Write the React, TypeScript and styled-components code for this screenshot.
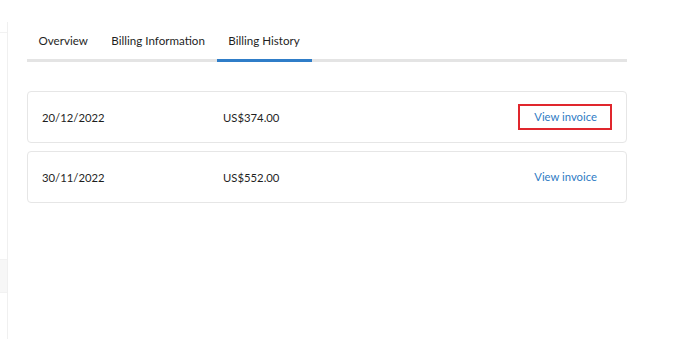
import styled, { createGlobalStyle } from "styled-components";

const GlobalStyle = createGlobalStyle`
  html, body {
    margin: 0;
    padding: 0;
    background: #ffffff;
  }
  body {
    font-family: Lato, "Open Sans", "Liberation Sans", sans-serif;
    color: #222;
  }
`;

const Page = styled.div`
  display: flex;
  min-height: 339px;
`;
const Sidebar = styled.div`
  width: 7px;
  margin-top: 22px;
  border-right: 1px solid #f0f0f0;
  display: flex;
  flex-direction: column;
`;
const SideItem = styled.div<{ $h: number; $shade?: boolean }>`
  height: ${(p) => p.$h}px;
  border-bottom: 1px solid #f2f2f2;
  background: ${(p) => (p.$shade ? "#f7f7f7" : "transparent")};
`;
const Main = styled.div`
  width: 600px;
  margin-left: 19px;
  padding-top: 25px;
`;
const TabList = styled.div`
  display: flex;
  border-bottom: 3px solid #e4e4e4;
`;
const Tab = styled.div<{ $active?: boolean }>`
  padding: 8px 12px 10px 11.5px;
  font-size: 11.6px;
  line-height: 16px;
  color: #1f1f1f;
  margin-bottom: -3px;
  border-bottom: 3px solid ${(p) => (p.$active ? "#2f7dc8" : "transparent")};
`;
const List = styled.div`
  margin-top: 29px;
  display: flex;
  flex-direction: column;
  gap: 8px;
`;
const Row = styled.div`
  height: 50px;
  border: 1px solid #e6e6e6;
  border-radius: 4px;
  padding: 0 14px;
  display: flex;
  align-items: center;
  font-size: 11.3px;
  color: #1f1f1f;
`;
const DateCell = styled.span`
  width: 181px;
`;
const Amount = styled.span`
  flex: 1;
`;
const InvoiceLink = styled.a<{ $focused?: boolean }>`
  display: inline-block;
  height: 22px;
  line-height: 22px;
  padding: 0 13px 0 14px;
  border: 2px solid ${(p) => (p.$focused ? "#e0262d" : "transparent")};
  color: #2f7bc4;
  text-decoration: none;
  cursor: pointer;
`;

const invoices = [
  { date: "20/12/2022", amount: "US$374.00", focused: true },
  { date: "30/11/2022", amount: "US$552.00", focused: false },
];

export default function App() {
  return (
    <>
      <GlobalStyle />
      <Page>
        <Sidebar>
          <SideItem $h={10} />
          <SideItem $h={226} />
          <SideItem $h={32} $shade />
        </Sidebar>
        <Main>
          <TabList>
            <Tab>Overview</Tab>
            <Tab>Billing Information</Tab>
            <Tab $active>Billing History</Tab>
          </TabList>
          <List>
            {invoices.map((inv) => (
              <Row key={inv.date}>
                <DateCell>{inv.date}</DateCell>
                <Amount>{inv.amount}</Amount>
                <InvoiceLink $focused={inv.focused}>View invoice</InvoiceLink>
              </Row>
            ))}
          </List>
        </Main>
      </Page>
    </>
  );
}
